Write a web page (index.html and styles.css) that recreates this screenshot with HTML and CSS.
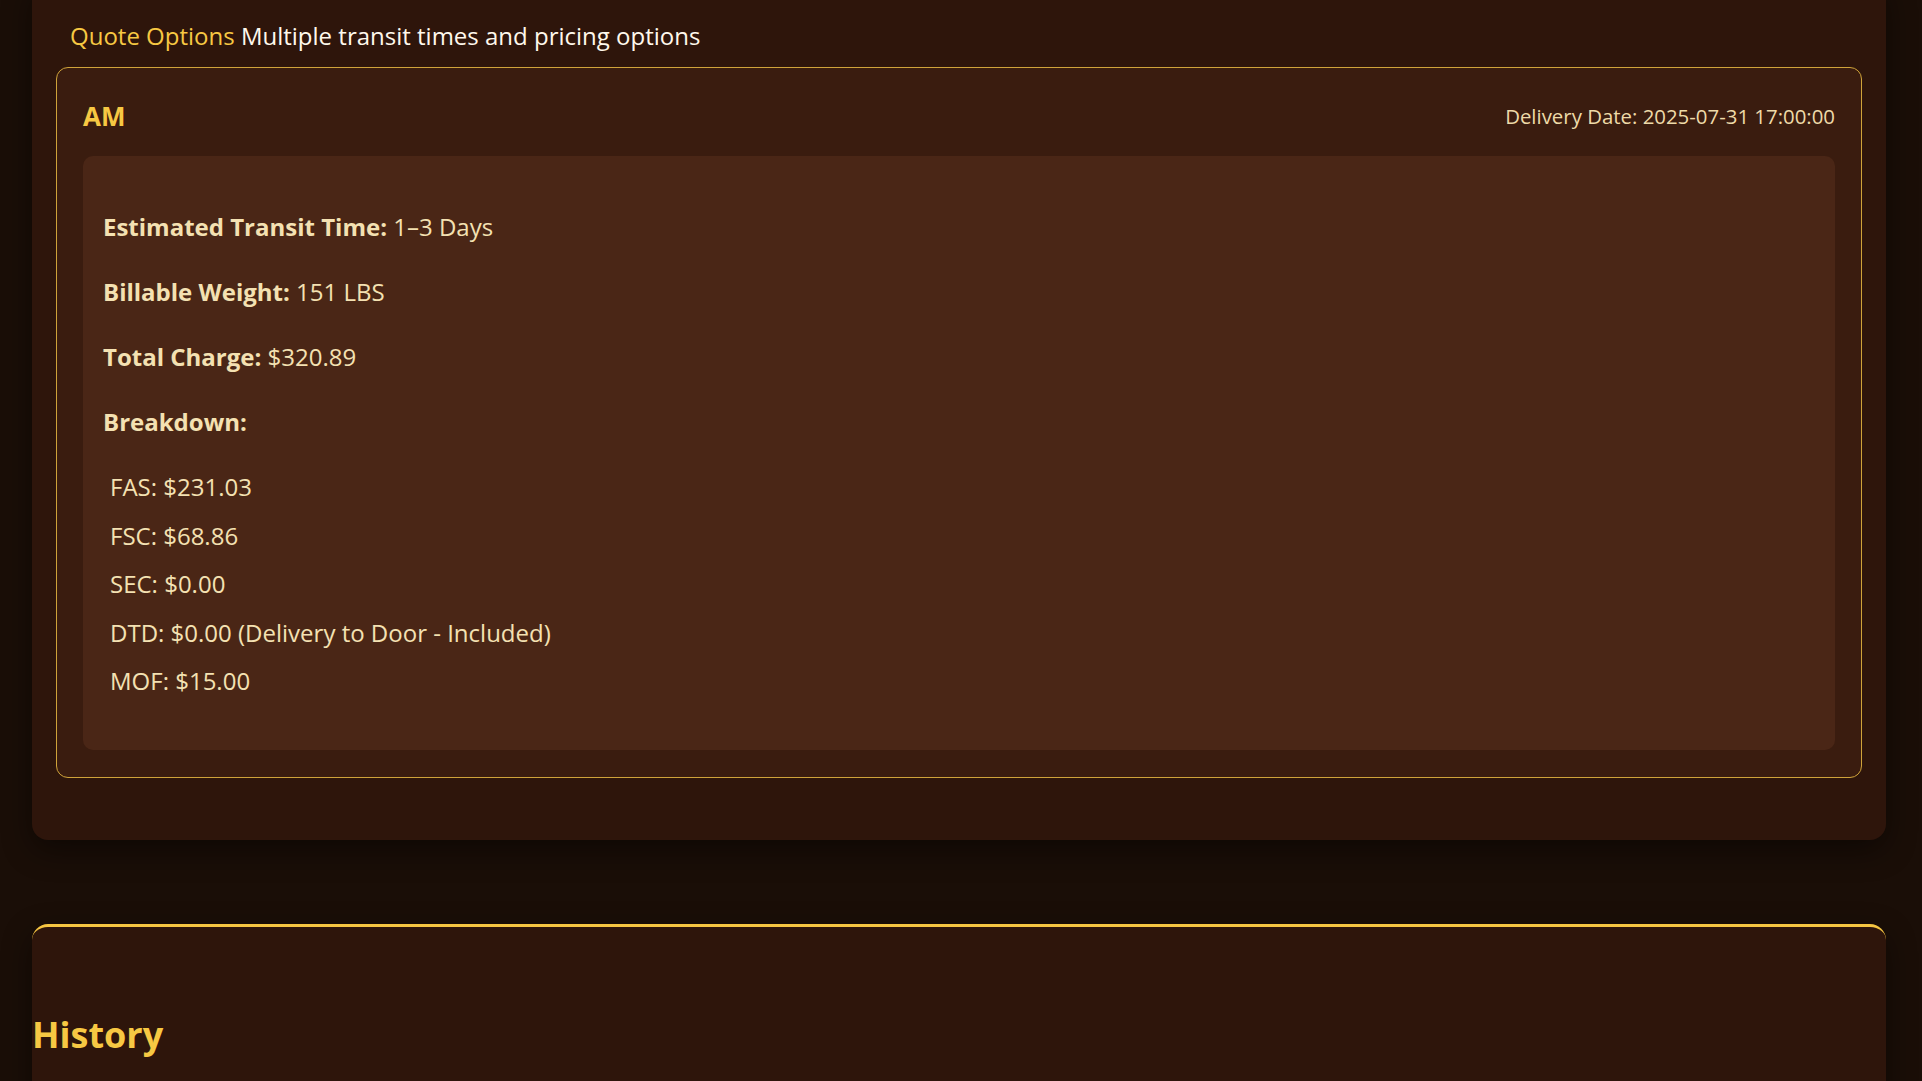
FILE: index.html
```html
<!DOCTYPE html>
<html lang="en">
<head>
<meta charset="utf-8">
<title>Quote Options</title>
<link rel="stylesheet" href="styles.css">
</head>
<body>
<div class="page">
  <section class="panel panel-quotes">
    <h3 class="section-title"><span class="accent">Quote Options</span> Multiple transit times and pricing options</h3>
    <div class="quote-card">
      <div class="quote-head">
        <span class="service">AM</span>
        <span class="delivery">Delivery Date: 2025-07-31 17:00:00</span>
      </div>
      <div class="quote-body">
        <p><strong>Estimated Transit Time:</strong> 1–3 Days</p>
        <p><strong>Billable Weight:</strong> 151 LBS</p>
        <p><strong>Total Charge:</strong> $320.89</p>
        <p><strong>Breakdown:</strong></p>
        <ul class="breakdown">
          <li>FAS: $231.03</li>
          <li>FSC: $68.86</li>
          <li>SEC: $0.00</li>
          <li>DTD: $0.00 (Delivery to Door - Included)</li>
          <li>MOF: $15.00</li>
        </ul>
      </div>
    </div>
  </section>
  <section class="panel panel-history">
    <h2 class="history-title">History</h2>
  </section>
</div>
</body>
</html>
```

FILE: styles.css
```css
html, body {
  margin: 0;
  padding: 0;
  background: #1a0e07;
  overflow: hidden;
}
body {
  font-family: "Open Sans", "Noto Sans", sans-serif;
  color: #f4e1b2;
}
.page {
  padding: 0 36px 0 32px;
}
.panel {
  background: #2e150b;
  border-radius: 16px;
  box-shadow: 0 10px 30px rgba(0, 0, 0, 0.45);
}
.panel-quotes {
  margin-top: -20px;
  padding: 41px 24px 62px;
}
.section-title {
  margin: 0 0 16px;
  padding-left: 14px;
  font-size: 24px;
  font-weight: 400;
  line-height: 30px;
  color: #fff8ec;
}
.accent {
  color: #f7c843;
}
.quote-card {
  background: #3a1c0f;
  border: 1px solid #cfa33a;
  border-radius: 12px;
  padding: 33px 26px 27px;
}
.quote-head {
  display: flex;
  justify-content: space-between;
  align-items: center;
  height: 30px;
  margin-bottom: 25px;
}
.service {
  font-size: 26px;
  font-weight: 700;
  color: #f7c843;
}
.delivery {
  font-size: 20.4px;
  color: #eedaa8;
}
.quote-body {
  background: #4a2616;
  border-radius: 10px;
  padding: 22px 20px 20.5px;
}
.quote-body p {
  margin: 32px 0;
  font-size: 24px;
  line-height: 33px;
}
.quote-body strong {
  font-weight: 700;
}
.breakdown {
  list-style: none;
  margin: 32px 0;
  padding: 0 0 0 7px;
}
.breakdown li {
  font-size: 24px;
  line-height: 33px;
}
.breakdown li + li {
  margin-top: 15.5px;
}
.panel-history {
  margin-top: 84px;
  border-top: 3px solid #f5c542;
  padding-top: 83px;
  min-height: 300px;
}
.history-title {
  margin: 0;
  font-size: 36px;
  line-height: 50px;
  font-weight: 700;
  color: #f7c843;
}
```
